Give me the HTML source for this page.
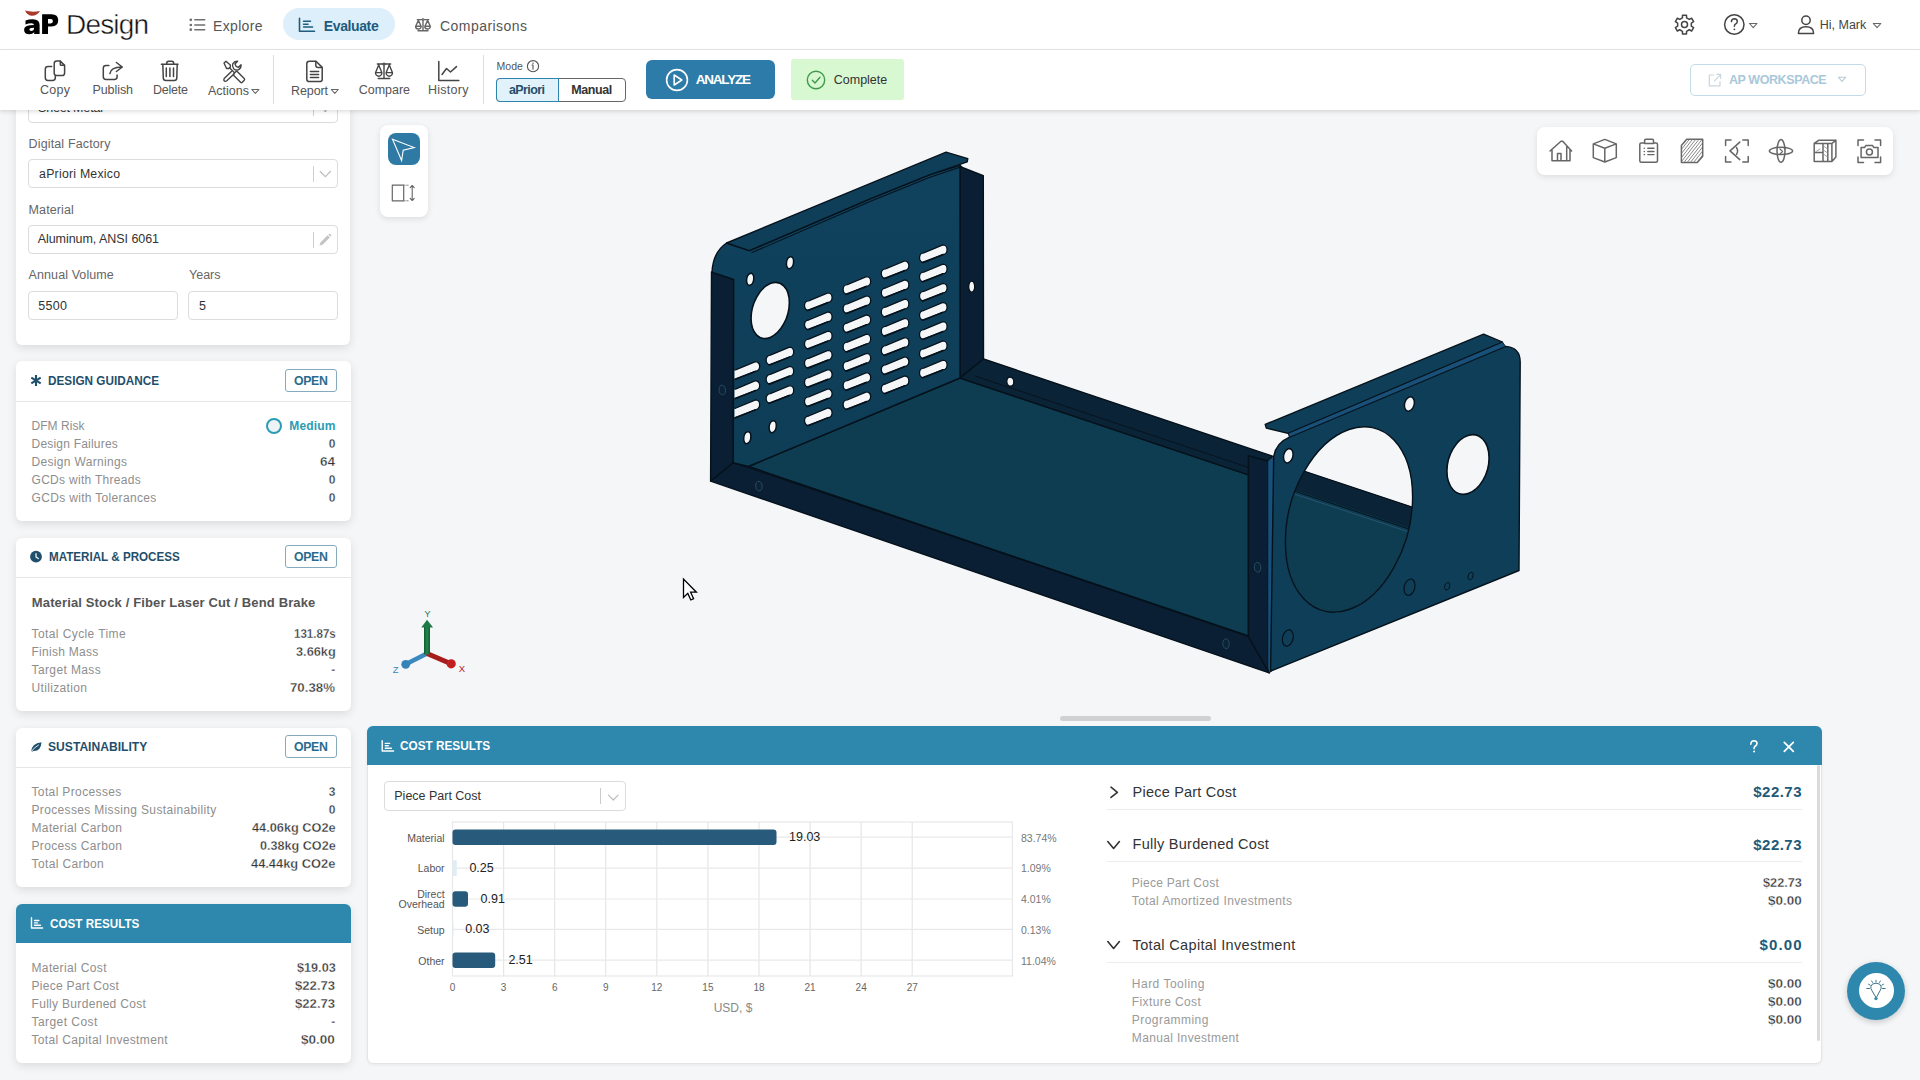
<!DOCTYPE html><html><head><meta charset="utf-8"><style>
html,body{margin:0;padding:0;}
body{width:1920px;height:1080px;overflow:hidden;position:relative;background:#f4f6f8;font-family:"Liberation Sans",sans-serif;}
.t{position:absolute;white-space:nowrap;}
.b{position:absolute;box-sizing:border-box;}
svg{position:absolute;left:0;top:0;overflow:visible}
</style></head><body>
<svg width="1920" height="1080" viewBox="0 0 1920 1080"><defs><clipPath id="bh"><circle r="1" transform="matrix(63.6,-22.4,0,90,1349,519.5)"/></clipPath><linearGradient id="gface" x1="0" y1="0" x2="0" y2="1"><stop offset="0" stop-color="#10425e"/><stop offset="1" stop-color="#0e3d56"/></linearGradient><linearGradient id="gdark" x1="0" y1="0" x2="1" y2="0"><stop offset="0" stop-color="#0a1d31"/><stop offset="1" stop-color="#0c2840"/></linearGradient></defs><polygon points="711.5,272.0 733.7,279.3 733.3,462.8 710.6,481.1" fill="#0a1f33" stroke="#05121c" stroke-width="1.4" stroke-linejoin="round"/><polygon points="960.0,165.3 962.3,167.5 983.3,175.6 983.5,359.0 960.0,378.0" fill="#0a1f33" stroke="#05121c" stroke-width="1.4" stroke-linejoin="round"/><polygon points="748.3,466.5 960.0,378.0 1248.5,474.8 1248.5,636.0" fill="#0e3d51" stroke="#05121c" stroke-width="1.4" stroke-linejoin="round"/><polygon points="960.0,378.0 983.5,359.0 1273.0,456.3 1248.5,474.8" fill="#0b2336" stroke="#05121c" stroke-width="1.4" stroke-linejoin="round"/><line x1="975.0" y1="376.0" x2="1250.0" y2="468.0" stroke="#05121c" stroke-width="0.8"/><polygon points="710.6,481.1 733.3,462.8 748.3,466.5 1248.4,636.7 1269.2,672.9" fill="#0a1f33" stroke="#05121c" stroke-width="1.4" stroke-linejoin="round"/><line x1="733.3" y1="462.8" x2="1248.5" y2="636.0" stroke="#05121c" stroke-width="0.8"/><polygon points="1248.4,455.6 1267.8,461.0 1267.8,668.0 1269.2,672.9 1248.4,636.7" fill="#0a1f33" stroke="#05121c" stroke-width="1.4" stroke-linejoin="round"/><polygon points="1267.8,461.0 1273.7,457.0 1273.7,669.6 1269.2,672.9 1267.8,668.0" fill="#17507a" stroke="#05121c" stroke-width="0.7" stroke-linejoin="round"/><path d="M749.3,250.7 L870,198.8 L930,174.6 L960,165.3 L960,378 L748.3,466.5 L733.3,462.8 L733.7,279.3 L712,272.1 Q713,252 726.6,243 Z" fill="url(#gface)" stroke="#05121c" stroke-width="1.4" stroke-linejoin="round"/><polygon points="726.6,243.0 946.1,152.2 967.8,158.6 967.2,161.9 930.0,174.6 870.0,198.8 749.3,250.7" fill="#0f3f58" stroke="#05121c" stroke-width="1.4" stroke-linejoin="round"/><polyline points="751.5,252.8 870,201.6 930,177.3 960.5,167" fill="none" stroke="#05121c" stroke-width="1.1"/><path d="M923.70,252.88 L942.90,244.92 A4.2,4.8 0 0 1 942.90,254.52 L923.70,262.48 A4.2,4.8 0 0 1 923.70,252.88 Z" fill="#f4f6f8" stroke="#05121c" stroke-width="1.3"/><path d="M921.70,262.78 L942.90,254.82" stroke="#05121c" stroke-width="1.5"/><path d="M923.70,272.08 L942.90,264.12 A4.2,4.8 0 0 1 942.90,273.72 L923.70,281.68 A4.2,4.8 0 0 1 923.70,272.08 Z" fill="#f4f6f8" stroke="#05121c" stroke-width="1.3"/><path d="M921.70,281.98 L942.90,274.02" stroke="#05121c" stroke-width="1.5"/><path d="M923.70,291.28 L942.90,283.32 A4.2,4.8 0 0 1 942.90,292.92 L923.70,300.88 A4.2,4.8 0 0 1 923.70,291.28 Z" fill="#f4f6f8" stroke="#05121c" stroke-width="1.3"/><path d="M921.70,301.18 L942.90,293.22" stroke="#05121c" stroke-width="1.5"/><path d="M923.70,310.48 L942.90,302.52 A4.2,4.8 0 0 1 942.90,312.12 L923.70,320.08 A4.2,4.8 0 0 1 923.70,310.48 Z" fill="#f4f6f8" stroke="#05121c" stroke-width="1.3"/><path d="M921.70,320.38 L942.90,312.42" stroke="#05121c" stroke-width="1.5"/><path d="M923.70,329.68 L942.90,321.72 A4.2,4.8 0 0 1 942.90,331.32 L923.70,339.28 A4.2,4.8 0 0 1 923.70,329.68 Z" fill="#f4f6f8" stroke="#05121c" stroke-width="1.3"/><path d="M921.70,339.58 L942.90,331.62" stroke="#05121c" stroke-width="1.5"/><path d="M923.70,348.88 L942.90,340.92 A4.2,4.8 0 0 1 942.90,350.52 L923.70,358.48 A4.2,4.8 0 0 1 923.70,348.88 Z" fill="#f4f6f8" stroke="#05121c" stroke-width="1.3"/><path d="M921.70,358.78 L942.90,350.82" stroke="#05121c" stroke-width="1.5"/><path d="M923.70,368.08 L942.90,360.12 A4.2,4.8 0 0 1 942.90,369.72 L923.70,377.68 A4.2,4.8 0 0 1 923.70,368.08 Z" fill="#f4f6f8" stroke="#05121c" stroke-width="1.3"/><path d="M921.70,377.98 L942.90,370.02" stroke="#05121c" stroke-width="1.5"/><path d="M885.50,268.78 L904.70,260.82 A4.2,4.8 0 0 1 904.70,270.42 L885.50,278.38 A4.2,4.8 0 0 1 885.50,268.78 Z" fill="#f4f6f8" stroke="#05121c" stroke-width="1.3"/><path d="M883.50,278.68 L904.70,270.72" stroke="#05121c" stroke-width="1.5"/><path d="M885.50,287.98 L904.70,280.02 A4.2,4.8 0 0 1 904.70,289.62 L885.50,297.58 A4.2,4.8 0 0 1 885.50,287.98 Z" fill="#f4f6f8" stroke="#05121c" stroke-width="1.3"/><path d="M883.50,297.88 L904.70,289.92" stroke="#05121c" stroke-width="1.5"/><path d="M885.50,307.18 L904.70,299.22 A4.2,4.8 0 0 1 904.70,308.82 L885.50,316.78 A4.2,4.8 0 0 1 885.50,307.18 Z" fill="#f4f6f8" stroke="#05121c" stroke-width="1.3"/><path d="M883.50,317.08 L904.70,309.12" stroke="#05121c" stroke-width="1.5"/><path d="M885.50,326.38 L904.70,318.42 A4.2,4.8 0 0 1 904.70,328.02 L885.50,335.98 A4.2,4.8 0 0 1 885.50,326.38 Z" fill="#f4f6f8" stroke="#05121c" stroke-width="1.3"/><path d="M883.50,336.28 L904.70,328.32" stroke="#05121c" stroke-width="1.5"/><path d="M885.50,345.58 L904.70,337.62 A4.2,4.8 0 0 1 904.70,347.22 L885.50,355.18 A4.2,4.8 0 0 1 885.50,345.58 Z" fill="#f4f6f8" stroke="#05121c" stroke-width="1.3"/><path d="M883.50,355.48 L904.70,347.52" stroke="#05121c" stroke-width="1.5"/><path d="M885.50,364.78 L904.70,356.82 A4.2,4.8 0 0 1 904.70,366.42 L885.50,374.38 A4.2,4.8 0 0 1 885.50,364.78 Z" fill="#f4f6f8" stroke="#05121c" stroke-width="1.3"/><path d="M883.50,374.68 L904.70,366.72" stroke="#05121c" stroke-width="1.5"/><path d="M885.50,383.98 L904.70,376.02 A4.2,4.8 0 0 1 904.70,385.62 L885.50,393.58 A4.2,4.8 0 0 1 885.50,383.98 Z" fill="#f4f6f8" stroke="#05121c" stroke-width="1.3"/><path d="M883.50,393.88 L904.70,385.92" stroke="#05121c" stroke-width="1.5"/><path d="M847.30,284.58 L866.50,276.62 A4.2,4.8 0 0 1 866.50,286.22 L847.30,294.18 A4.2,4.8 0 0 1 847.30,284.58 Z" fill="#f4f6f8" stroke="#05121c" stroke-width="1.3"/><path d="M845.30,294.48 L866.50,286.52" stroke="#05121c" stroke-width="1.5"/><path d="M847.30,303.78 L866.50,295.82 A4.2,4.8 0 0 1 866.50,305.42 L847.30,313.38 A4.2,4.8 0 0 1 847.30,303.78 Z" fill="#f4f6f8" stroke="#05121c" stroke-width="1.3"/><path d="M845.30,313.68 L866.50,305.72" stroke="#05121c" stroke-width="1.5"/><path d="M847.30,322.98 L866.50,315.02 A4.2,4.8 0 0 1 866.50,324.62 L847.30,332.58 A4.2,4.8 0 0 1 847.30,322.98 Z" fill="#f4f6f8" stroke="#05121c" stroke-width="1.3"/><path d="M845.30,332.88 L866.50,324.92" stroke="#05121c" stroke-width="1.5"/><path d="M847.30,342.18 L866.50,334.22 A4.2,4.8 0 0 1 866.50,343.82 L847.30,351.78 A4.2,4.8 0 0 1 847.30,342.18 Z" fill="#f4f6f8" stroke="#05121c" stroke-width="1.3"/><path d="M845.30,352.08 L866.50,344.12" stroke="#05121c" stroke-width="1.5"/><path d="M847.30,361.38 L866.50,353.42 A4.2,4.8 0 0 1 866.50,363.02 L847.30,370.98 A4.2,4.8 0 0 1 847.30,361.38 Z" fill="#f4f6f8" stroke="#05121c" stroke-width="1.3"/><path d="M845.30,371.28 L866.50,363.32" stroke="#05121c" stroke-width="1.5"/><path d="M847.30,380.58 L866.50,372.62 A4.2,4.8 0 0 1 866.50,382.22 L847.30,390.18 A4.2,4.8 0 0 1 847.30,380.58 Z" fill="#f4f6f8" stroke="#05121c" stroke-width="1.3"/><path d="M845.30,390.48 L866.50,382.52" stroke="#05121c" stroke-width="1.5"/><path d="M847.30,399.78 L866.50,391.82 A4.2,4.8 0 0 1 866.50,401.42 L847.30,409.38 A4.2,4.8 0 0 1 847.30,399.78 Z" fill="#f4f6f8" stroke="#05121c" stroke-width="1.3"/><path d="M845.30,409.68 L866.50,401.72" stroke="#05121c" stroke-width="1.5"/><path d="M808.70,300.78 L827.90,292.82 A4.2,4.8 0 0 1 827.90,302.42 L808.70,310.38 A4.2,4.8 0 0 1 808.70,300.78 Z" fill="#f4f6f8" stroke="#05121c" stroke-width="1.3"/><path d="M806.70,310.68 L827.90,302.72" stroke="#05121c" stroke-width="1.5"/><path d="M808.70,319.98 L827.90,312.02 A4.2,4.8 0 0 1 827.90,321.62 L808.70,329.58 A4.2,4.8 0 0 1 808.70,319.98 Z" fill="#f4f6f8" stroke="#05121c" stroke-width="1.3"/><path d="M806.70,329.88 L827.90,321.92" stroke="#05121c" stroke-width="1.5"/><path d="M808.70,339.18 L827.90,331.22 A4.2,4.8 0 0 1 827.90,340.82 L808.70,348.78 A4.2,4.8 0 0 1 808.70,339.18 Z" fill="#f4f6f8" stroke="#05121c" stroke-width="1.3"/><path d="M806.70,349.08 L827.90,341.12" stroke="#05121c" stroke-width="1.5"/><path d="M808.70,358.38 L827.90,350.42 A4.2,4.8 0 0 1 827.90,360.02 L808.70,367.98 A4.2,4.8 0 0 1 808.70,358.38 Z" fill="#f4f6f8" stroke="#05121c" stroke-width="1.3"/><path d="M806.70,368.28 L827.90,360.32" stroke="#05121c" stroke-width="1.5"/><path d="M808.70,377.58 L827.90,369.62 A4.2,4.8 0 0 1 827.90,379.22 L808.70,387.18 A4.2,4.8 0 0 1 808.70,377.58 Z" fill="#f4f6f8" stroke="#05121c" stroke-width="1.3"/><path d="M806.70,387.48 L827.90,379.52" stroke="#05121c" stroke-width="1.5"/><path d="M808.70,396.78 L827.90,388.82 A4.2,4.8 0 0 1 827.90,398.42 L808.70,406.38 A4.2,4.8 0 0 1 808.70,396.78 Z" fill="#f4f6f8" stroke="#05121c" stroke-width="1.3"/><path d="M806.70,406.68 L827.90,398.72" stroke="#05121c" stroke-width="1.5"/><path d="M808.70,415.98 L827.90,408.02 A4.2,4.8 0 0 1 827.90,417.62 L808.70,425.58 A4.2,4.8 0 0 1 808.70,415.98 Z" fill="#f4f6f8" stroke="#05121c" stroke-width="1.3"/><path d="M806.70,425.88 L827.90,417.92" stroke="#05121c" stroke-width="1.5"/><path d="M770.30,355.18 L789.50,347.22 A4.2,4.8 0 0 1 789.50,356.82 L770.30,364.78 A4.2,4.8 0 0 1 770.30,355.18 Z" fill="#f4f6f8" stroke="#05121c" stroke-width="1.3"/><path d="M768.30,365.08 L789.50,357.12" stroke="#05121c" stroke-width="1.5"/><path d="M770.30,374.38 L789.50,366.42 A4.2,4.8 0 0 1 789.50,376.02 L770.30,383.98 A4.2,4.8 0 0 1 770.30,374.38 Z" fill="#f4f6f8" stroke="#05121c" stroke-width="1.3"/><path d="M768.30,384.28 L789.50,376.32" stroke="#05121c" stroke-width="1.5"/><path d="M770.30,393.58 L789.50,385.62 A4.2,4.8 0 0 1 789.50,395.22 L770.30,403.18 A4.2,4.8 0 0 1 770.30,393.58 Z" fill="#f4f6f8" stroke="#05121c" stroke-width="1.3"/><path d="M768.30,403.48 L789.50,395.52" stroke="#05121c" stroke-width="1.5"/><g clip-path="url(#lc)"><path d="M735.50,369.85 L755.50,361.55 A4.2,4.8 0 0 1 755.50,371.15 L735.50,379.45 A4.2,4.8 0 0 1 735.50,369.85 Z" fill="#f4f6f8" stroke="#05121c" stroke-width="1.3"/><path d="M733.50,379.75 L755.50,371.45" stroke="#05121c" stroke-width="1.5"/></g><g clip-path="url(#lc)"><path d="M735.50,389.05 L755.50,380.75 A4.2,4.8 0 0 1 755.50,390.35 L735.50,398.65 A4.2,4.8 0 0 1 735.50,389.05 Z" fill="#f4f6f8" stroke="#05121c" stroke-width="1.3"/><path d="M733.50,398.95 L755.50,390.65" stroke="#05121c" stroke-width="1.5"/></g><g clip-path="url(#lc)"><path d="M735.50,408.25 L755.50,399.95 A4.2,4.8 0 0 1 755.50,409.55 L735.50,417.85 A4.2,4.8 0 0 1 735.50,408.25 Z" fill="#f4f6f8" stroke="#05121c" stroke-width="1.3"/><path d="M733.50,418.15 L755.50,409.85" stroke="#05121c" stroke-width="1.5"/></g><defs><clipPath id="lc"><rect x="734.5" y="200" width="100" height="300"/></clipPath></defs><circle r="1" fill="#f4f6f8" stroke="#05121c" stroke-width="1.6" vector-effect="non-scaling-stroke" transform="matrix(19.150,-7.850,0.000,26.900,770.20,310.50)"/><circle r="1" fill="#f4f6f8" stroke="#05121c" stroke-width="1.5" vector-effect="non-scaling-stroke" transform="matrix(3.600,-1.400,0.000,5.800,790.00,262.70)"/><circle r="1" fill="#f4f6f8" stroke="#05121c" stroke-width="1.5" vector-effect="non-scaling-stroke" transform="matrix(3.600,-1.400,0.000,5.800,750.20,279.30)"/><circle r="1" fill="#f4f6f8" stroke="#05121c" stroke-width="1.5" vector-effect="non-scaling-stroke" transform="matrix(3.600,-1.400,0.000,5.800,772.70,426.70)"/><circle r="1" fill="#f4f6f8" stroke="#05121c" stroke-width="1.5" vector-effect="non-scaling-stroke" transform="matrix(3.600,-1.400,0.000,5.800,747.30,437.70)"/><circle r="1" fill="#f4f6f8" stroke="#05121c" stroke-width="1.3" vector-effect="non-scaling-stroke" transform="matrix(3.000,0.000,0.000,5.500,971.70,286.70)"/><circle r="1" fill="#f4f6f8" stroke="#05121c" stroke-width="1.3" vector-effect="non-scaling-stroke" transform="matrix(3.500,0.500,0.000,4.500,1010.30,381.70)"/><circle r="1" fill="#0b2336" stroke="#2a4a60" stroke-width="1.0" vector-effect="non-scaling-stroke" transform="matrix(3.200,0.600,0.000,4.800,722.30,390.00)"/><circle r="1" fill="#0b2336" stroke="#2a4a60" stroke-width="1.0" vector-effect="non-scaling-stroke" transform="matrix(3.200,0.600,0.000,4.800,758.90,486.10)"/><circle r="1" fill="#0b2336" stroke="#2a4a60" stroke-width="1.0" vector-effect="non-scaling-stroke" transform="matrix(3.200,0.600,0.000,4.800,1226.00,643.70)"/><circle r="1" fill="#0b2336" stroke="#2a4a60" stroke-width="1.0" vector-effect="non-scaling-stroke" transform="matrix(3.200,0.600,0.000,4.800,1257.60,567.30)"/><polygon points="1265.2,424.4 1483.6,334.2 1502.5,342.2 1288.1,433.4 1266.3,428.1" fill="#0f3f58" stroke="#05121c" stroke-width="1.4" stroke-linejoin="round"/><path d="M1289.5,437.2 L1505.6,346.4 Q1520.2,347.5 1520.2,362 L1519,570.5 L1270.6,671.2 L1273.7,456.3 Q1276,443 1289.5,437.2 Z" fill="#0f3f58" stroke="#05121c" stroke-width="1.4" stroke-linejoin="round"/><polygon points="1288.1,433.4 1502.5,342.2 1505.6,346.4 1289.5,437.2" fill="#185079" stroke="#05121c" stroke-width="0.9" stroke-linejoin="round"/><g clip-path="url(#bh)"><rect x="1270" y="420" width="160" height="200" fill="#f4f6f8"/><polygon points="1270.0,459.8 1430.0,513.0 1430.0,620.0 1270.0,620.0" fill="#0e3d51" stroke="#05121c" stroke-width="0" stroke-linejoin="round"/><polygon points="1270.0,459.8 1430.0,513.0 1430.0,535.0 1270.0,482.0" fill="#0b2336" stroke="#05121c" stroke-width="0" stroke-linejoin="round"/><line x1="1270.0" y1="459.8" x2="1430.0" y2="513.0" stroke="#05121c" stroke-width="1.2"/><line x1="1270.0" y1="483.0" x2="1430.0" y2="536.0" stroke="#05121c" stroke-width="1.0"/><line x1="1270.0" y1="486.0" x2="1430.0" y2="539.0" stroke="#2c5878" stroke-width="0.8"/></g><circle r="1" fill="none" stroke="#05121c" stroke-width="1.4" vector-effect="non-scaling-stroke" transform="matrix(63.600,-22.400,0.000,90.000,1349.00,519.50)"/><circle r="1" fill="#f4f6f8" stroke="#05121c" stroke-width="1.6" vector-effect="non-scaling-stroke" transform="matrix(21.100,-6.600,0.000,29.100,1468.00,464.50)"/><circle r="1" fill="#f4f6f8" stroke="#05121c" stroke-width="1.5" vector-effect="non-scaling-stroke" transform="matrix(4.800,-1.500,0.000,7.000,1288.30,455.80)"/><circle r="1" fill="#f4f6f8" stroke="#05121c" stroke-width="1.5" vector-effect="non-scaling-stroke" transform="matrix(5.000,-1.500,0.000,7.000,1409.40,404.00)"/><circle r="1" fill="#0f3f58" stroke="#05121c" stroke-width="1.2" vector-effect="non-scaling-stroke" transform="matrix(5.500,-1.800,0.000,8.000,1409.50,587.20)"/><circle r="1" fill="#0f3f58" stroke="#05121c" stroke-width="1.2" vector-effect="non-scaling-stroke" transform="matrix(5.500,-1.800,0.000,8.000,1287.80,638.00)"/><circle r="1" fill="#0f3f58" stroke="#05121c" stroke-width="1.0" vector-effect="non-scaling-stroke" transform="matrix(2.600,-0.800,0.000,3.600,1447.20,586.20)"/><circle r="1" fill="#0f3f58" stroke="#05121c" stroke-width="1.0" vector-effect="non-scaling-stroke" transform="matrix(2.600,-0.800,0.000,3.600,1470.60,576.00)"/></svg>
<div class="b" style="left:16px;top:60px;width:334px;height:285px;background:#fff;border-radius:6px;box-shadow:0 3px 10px rgba(0,0,0,0.11);"></div>
<div class="b" style="left:16px;top:361px;width:335px;height:160px;background:#fff;border-radius:6px;box-shadow:0 3px 10px rgba(0,0,0,0.11);"></div>
<div class="b" style="left:16px;top:538px;width:335px;height:173px;background:#fff;border-radius:6px;box-shadow:0 3px 10px rgba(0,0,0,0.11);"></div>
<div class="b" style="left:16px;top:728px;width:335px;height:159px;background:#fff;border-radius:6px;box-shadow:0 3px 10px rgba(0,0,0,0.11);"></div>
<div class="b" style="left:16px;top:904px;width:335px;height:159px;background:#fff;border-radius:6px;box-shadow:0 3px 10px rgba(0,0,0,0.11);"></div>
<div class="b" style="left:28px;top:93px;width:310px;height:30px;border:1px solid #dcdcdc;border-radius:4px;background:#fff"></div>
<div class="t" style="left:38.00px;top:99.97px;font-size:12.5px;line-height:16px;color:#333333;letter-spacing:-0.170px;">Sheet Metal</div>
<div class="b" style="left:313px;top:100px;width:1px;height:16px;background:#d0d0d0"></div>
<div class="b" style="left:28px;top:159px;width:310px;height:29px;border:1px solid #dcdcdc;border-radius:4px;background:#fff"></div>
<div class="b" style="left:28px;top:225px;width:310px;height:29px;border:1px solid #dcdcdc;border-radius:4px;background:#fff"></div>
<div class="b" style="left:28px;top:291px;width:150px;height:29px;border:1px solid #dcdcdc;border-radius:4px;background:#fff"></div>
<div class="b" style="left:188px;top:291px;width:150px;height:29px;border:1px solid #dcdcdc;border-radius:4px;background:#fff"></div>
<div class="b" style="left:313px;top:166px;width:1px;height:16px;background:#d0d0d0"></div>
<div class="b" style="left:313px;top:232px;width:1px;height:16px;background:#d0d0d0"></div>
<div class="t" style="left:28.60px;top:135.67px;font-size:12.5px;line-height:16px;color:#666666;letter-spacing:0.136px;">Digital Factory</div>
<div class="t" style="left:39.10px;top:166.04px;font-size:12.3px;line-height:16px;color:#333333;letter-spacing:0.231px;">aPriori Mexico</div>
<div class="t" style="left:28.60px;top:201.67px;font-size:12.5px;line-height:16px;color:#666666;letter-spacing:0.107px;">Material</div>
<div class="t" style="left:37.70px;top:231.17px;font-size:12.5px;line-height:16px;color:#333333;letter-spacing:-0.050px;">Aluminum, ANSI 6061</div>
<div class="t" style="left:28.60px;top:267.27px;font-size:12.5px;line-height:16px;color:#666666;letter-spacing:0.092px;">Annual Volume</div>
<div class="t" style="left:189.00px;top:267.27px;font-size:12.5px;line-height:16px;color:#666666;letter-spacing:0.000px;">Years</div>
<div class="t" style="left:38.20px;top:298.27px;font-size:12.5px;line-height:16px;color:#333333;letter-spacing:0.300px;">5500</div>
<div class="t" style="left:199.00px;top:298.27px;font-size:12.5px;line-height:16px;color:#333333;letter-spacing:0.000px;">5</div>
<div class="t" style="left:48.30px;top:372.26px;font-size:12.8px;line-height:17px;color:#1f4f6b;font-weight:700;letter-spacing:0.000px;transform:scaleX(0.9181);transform-origin:0 0;">DESIGN GUIDANCE</div>
<div class="b" style="left:16px;top:401px;width:335px;height:1px;background:#e6e6e6"></div>
<div class="b" style="left:285px;top:369px;width:52px;height:23px;border:1px solid #86aabd;border-radius:3px"></div>
<div class="t" style="left:294.00px;top:373.34px;font-size:12.3px;line-height:16px;color:#2a6b8c;font-weight:700;letter-spacing:-0.350px;">OPEN</div>
<div class="t" style="left:48.60px;top:548.26px;font-size:12.8px;line-height:17px;color:#1f4f6b;font-weight:700;letter-spacing:0.000px;transform:scaleX(0.9090);transform-origin:0 0;">MATERIAL &amp; PROCESS</div>
<div class="b" style="left:16px;top:577px;width:335px;height:1px;background:#e6e6e6"></div>
<div class="b" style="left:285px;top:545px;width:52px;height:23px;border:1px solid #86aabd;border-radius:3px"></div>
<div class="t" style="left:294.00px;top:549.34px;font-size:12.3px;line-height:16px;color:#2a6b8c;font-weight:700;letter-spacing:-0.350px;">OPEN</div>
<div class="t" style="left:48.00px;top:738.16px;font-size:12.8px;line-height:17px;color:#1f4f6b;font-weight:700;letter-spacing:0.000px;transform:scaleX(0.9457);transform-origin:0 0;">SUSTAINABILITY</div>
<div class="b" style="left:16px;top:767px;width:335px;height:1px;background:#e6e6e6"></div>
<div class="b" style="left:285px;top:735px;width:52px;height:23px;border:1px solid #86aabd;border-radius:3px"></div>
<div class="t" style="left:294.00px;top:739.34px;font-size:12.3px;line-height:16px;color:#2a6b8c;font-weight:700;letter-spacing:-0.350px;">OPEN</div>
<div class="b" style="left:16px;top:904px;width:335px;height:39px;background:#2e87ad;border-radius:6px 6px 0 0"></div>
<div class="t" style="left:49.50px;top:914.96px;font-size:12.8px;line-height:17px;color:#ffffff;font-weight:700;letter-spacing:0.000px;transform:scaleX(0.9132);transform-origin:0 0;">COST RESULTS</div>
<div class="t" style="left:31.50px;top:417.84px;font-size:12px;line-height:16px;color:#8e8e8e;letter-spacing:0.057px;">DFM Risk</div>
<div class="t" style="left:31.50px;top:435.84px;font-size:12px;line-height:16px;color:#8e8e8e;letter-spacing:0.211px;">Design Failures</div>
<div class="t" style="left:328.65px;top:435.84px;font-size:12px;line-height:16px;color:#333333;font-weight:700;letter-spacing:0.000px;-webkit-text-stroke:0.3px #fff;">0</div>
<div class="t" style="left:31.50px;top:453.84px;font-size:12px;line-height:16px;color:#8e8e8e;letter-spacing:0.332px;">Design Warnings</div>
<div class="t" style="left:320.30px;top:453.84px;font-size:12px;line-height:16px;color:#333333;font-weight:700;letter-spacing:0.000px;-webkit-text-stroke:0.3px #fff;transform:scaleX(1.1236);transform-origin:0 0;">64</div>
<div class="t" style="left:31.50px;top:471.84px;font-size:12px;line-height:16px;color:#8e8e8e;letter-spacing:0.300px;">GCDs with Threads</div>
<div class="t" style="left:328.65px;top:471.84px;font-size:12px;line-height:16px;color:#333333;font-weight:700;letter-spacing:0.000px;-webkit-text-stroke:0.3px #fff;">0</div>
<div class="t" style="left:31.50px;top:489.84px;font-size:12px;line-height:16px;color:#8e8e8e;letter-spacing:0.332px;">GCDs with Tolerances</div>
<div class="t" style="left:328.65px;top:489.84px;font-size:12px;line-height:16px;color:#333333;font-weight:700;letter-spacing:0.000px;-webkit-text-stroke:0.3px #fff;">0</div>
<div class="b" style="left:266px;top:418px;width:16px;height:16px;border:2px solid #2a9db5;border-radius:50%;background:#eef3f5"></div>
<div class="t" style="left:289.30px;top:417.84px;font-size:12px;line-height:16px;color:#2a9db5;font-weight:700;letter-spacing:0.170px;">Medium</div>
<div class="t" style="left:31.80px;top:594.00px;font-size:13px;line-height:17px;color:#555555;font-weight:700;letter-spacing:0.139px;">Material Stock / Fiber Laser Cut / Bend Brake</div>
<div class="t" style="left:31.50px;top:625.54px;font-size:12px;line-height:16px;color:#8e8e8e;letter-spacing:0.410px;">Total Cycle Time</div>
<div class="t" style="left:293.50px;top:625.54px;font-size:12px;line-height:16px;color:#333333;font-weight:700;letter-spacing:0.000px;-webkit-text-stroke:0.3px #fff;transform:scaleX(0.9631);transform-origin:0 0;">131.87s</div>
<div class="t" style="left:31.50px;top:643.54px;font-size:12px;line-height:16px;color:#8e8e8e;letter-spacing:0.280px;">Finish Mass</div>
<div class="t" style="left:295.60px;top:643.54px;font-size:12px;line-height:16px;color:#333333;font-weight:700;letter-spacing:0.000px;-webkit-text-stroke:0.3px #fff;transform:scaleX(1.0629);transform-origin:0 0;">3.66kg</div>
<div class="t" style="left:31.50px;top:661.54px;font-size:12px;line-height:16px;color:#8e8e8e;letter-spacing:0.385px;">Target Mass</div>
<div class="t" style="left:331.30px;top:661.54px;font-size:12px;line-height:16px;color:#333333;font-weight:700;letter-spacing:0.000px;-webkit-text-stroke:0.3px #fff;">-</div>
<div class="t" style="left:31.50px;top:679.54px;font-size:12px;line-height:16px;color:#8e8e8e;letter-spacing:0.350px;">Utilization</div>
<div class="t" style="left:290.40px;top:679.54px;font-size:12px;line-height:16px;color:#333333;font-weight:700;letter-spacing:0.000px;-webkit-text-stroke:0.3px #fff;transform:scaleX(1.1032);transform-origin:0 0;">70.38%</div>
<div class="t" style="left:31.50px;top:784.44px;font-size:12px;line-height:16px;color:#8e8e8e;letter-spacing:0.364px;">Total Processes</div>
<div class="t" style="left:328.65px;top:784.44px;font-size:12px;line-height:16px;color:#333333;font-weight:700;letter-spacing:0.000px;-webkit-text-stroke:0.3px #fff;">3</div>
<div class="t" style="left:31.50px;top:802.44px;font-size:12px;line-height:16px;color:#8e8e8e;letter-spacing:0.342px;">Processes Missing Sustainability</div>
<div class="t" style="left:328.65px;top:802.44px;font-size:12px;line-height:16px;color:#333333;font-weight:700;letter-spacing:0.000px;-webkit-text-stroke:0.3px #fff;">0</div>
<div class="t" style="left:31.50px;top:820.44px;font-size:12px;line-height:16px;color:#8e8e8e;letter-spacing:0.357px;">Material Carbon</div>
<div class="t" style="left:251.70px;top:820.44px;font-size:12px;line-height:16px;color:#333333;font-weight:700;letter-spacing:0.000px;-webkit-text-stroke:0.3px #fff;transform:scaleX(1.0623);transform-origin:0 0;">44.06kg CO2e</div>
<div class="t" style="left:31.50px;top:838.44px;font-size:12px;line-height:16px;color:#8e8e8e;letter-spacing:0.335px;">Process Carbon</div>
<div class="t" style="left:259.60px;top:838.44px;font-size:12px;line-height:16px;color:#333333;font-weight:700;letter-spacing:0.000px;-webkit-text-stroke:0.3px #fff;transform:scaleX(1.0507);transform-origin:0 0;">0.38kg CO2e</div>
<div class="t" style="left:31.50px;top:856.44px;font-size:12px;line-height:16px;color:#8e8e8e;letter-spacing:0.386px;">Total Carbon</div>
<div class="t" style="left:251.00px;top:856.44px;font-size:12px;line-height:16px;color:#333333;font-weight:700;letter-spacing:0.000px;-webkit-text-stroke:0.3px #fff;transform:scaleX(1.0712);transform-origin:0 0;">44.44kg CO2e</div>
<div class="t" style="left:31.50px;top:959.84px;font-size:12px;line-height:16px;color:#8e8e8e;letter-spacing:0.358px;">Material Cost</div>
<div class="t" style="left:296.60px;top:959.84px;font-size:12px;line-height:16px;color:#333333;font-weight:700;letter-spacing:0.000px;-webkit-text-stroke:0.3px #fff;transform:scaleX(1.0545);transform-origin:0 0;">$19.03</div>
<div class="t" style="left:31.50px;top:977.84px;font-size:12px;line-height:16px;color:#8e8e8e;letter-spacing:0.289px;">Piece Part Cost</div>
<div class="t" style="left:295.20px;top:977.84px;font-size:12px;line-height:16px;color:#333333;font-weight:700;letter-spacing:0.000px;-webkit-text-stroke:0.3px #fff;transform:scaleX(1.0926);transform-origin:0 0;">$22.73</div>
<div class="t" style="left:31.50px;top:995.84px;font-size:12px;line-height:16px;color:#8e8e8e;letter-spacing:0.314px;">Fully Burdened Cost</div>
<div class="t" style="left:295.20px;top:995.84px;font-size:12px;line-height:16px;color:#333333;font-weight:700;letter-spacing:0.000px;-webkit-text-stroke:0.3px #fff;transform:scaleX(1.0926);transform-origin:0 0;">$22.73</div>
<div class="t" style="left:31.50px;top:1013.84px;font-size:12px;line-height:16px;color:#8e8e8e;letter-spacing:0.445px;">Target Cost</div>
<div class="t" style="left:331.30px;top:1013.84px;font-size:12px;line-height:16px;color:#333333;font-weight:700;letter-spacing:0.000px;-webkit-text-stroke:0.3px #fff;">-</div>
<div class="t" style="left:31.50px;top:1031.84px;font-size:12px;line-height:16px;color:#8e8e8e;letter-spacing:0.346px;">Total Capital Investment</div>
<div class="t" style="left:301.40px;top:1031.84px;font-size:12px;line-height:16px;color:#333333;font-weight:700;letter-spacing:0.000px;-webkit-text-stroke:0.3px #fff;transform:scaleX(1.1281);transform-origin:0 0;">$0.00</div>
<div class="b" style="left:0;top:0;width:1920px;height:50px;background:#fff;border-bottom:1px solid #e3e3e3"></div>
<div class="b" style="left:0;top:50px;width:1920px;height:60px;background:#fff;box-shadow:0 2px 4px rgba(0,0,0,0.12)"></div>
<div class="t" style="left:66.00px;top:7.10px;font-size:28px;line-height:36px;color:#111;letter-spacing:-0.830px;-webkit-text-stroke:0.45px #fff;">Design</div>
<div class="t" style="left:213.00px;top:16.95px;font-size:14px;line-height:18px;color:#555;letter-spacing:0.342px;">Explore</div>
<div class="b" style="left:283px;top:8px;width:112px;height:32px;border-radius:16px;background:#ddeffa"></div>
<div class="t" style="left:323.80px;top:16.95px;font-size:14px;line-height:18px;color:#1e5c7e;font-weight:700;letter-spacing:-0.386px;">Evaluate</div>
<div class="t" style="left:440.00px;top:16.95px;font-size:14px;line-height:18px;color:#555;letter-spacing:0.450px;">Comparisons</div>
<div class="t" style="left:1819.80px;top:16.67px;font-size:12.5px;line-height:16px;color:#444;letter-spacing:-0.014px;">Hi, Mark</div>
<div class="t" style="left:40.00px;top:81.67px;font-size:12.5px;line-height:16px;color:#555;letter-spacing:0.267px;">Copy</div>
<div class="t" style="left:92.50px;top:81.67px;font-size:12.5px;line-height:16px;color:#555;letter-spacing:-0.083px;">Publish</div>
<div class="t" style="left:152.90px;top:81.67px;font-size:12.5px;line-height:16px;color:#555;letter-spacing:-0.190px;">Delete</div>
<div class="t" style="left:207.90px;top:82.67px;font-size:12.5px;line-height:16px;color:#555;letter-spacing:0.033px;">Actions</div>
<div class="b" style="left:272.5px;top:55px;width:1px;height:49px;background:#ddd"></div>
<div class="t" style="left:291.00px;top:82.67px;font-size:12.5px;line-height:16px;color:#555;letter-spacing:-0.100px;">Report</div>
<div class="t" style="left:358.70px;top:81.67px;font-size:12.5px;line-height:16px;color:#555;letter-spacing:-0.017px;">Compare</div>
<div class="t" style="left:428.00px;top:81.67px;font-size:12.5px;line-height:16px;color:#555;letter-spacing:0.267px;">History</div>
<div class="b" style="left:482.5px;top:55px;width:1px;height:49px;background:#ddd"></div>
<div class="t" style="left:496.60px;top:59.36px;font-size:10.5px;line-height:14px;color:#555;letter-spacing:0.000px;">Mode</div>
<div class="b" style="left:496px;top:78px;width:130px;height:24px;border:1px solid #666;border-radius:4px;background:#fff"></div>
<div class="b" style="left:496px;top:78px;width:63px;height:24px;border:1px solid #2d84ad;border-radius:4px 0 0 4px;background:#e2f2fb"></div>
<div class="t" style="left:509.00px;top:82.17px;font-size:12.5px;line-height:16px;color:#1f4f6b;font-weight:700;letter-spacing:-0.600px;">aPriori</div>
<div class="t" style="left:571.30px;top:81.97px;font-size:12.5px;line-height:16px;color:#333;font-weight:700;letter-spacing:-0.430px;">Manual</div>
<div class="b" style="left:646px;top:60px;width:129px;height:39px;border-radius:6px;background:#2d7ba8"></div>
<div class="t" style="left:695.70px;top:71.32px;font-size:13.5px;line-height:18px;color:#fff;font-weight:700;letter-spacing:-1.200px;">ANALYZE</div>
<div class="b" style="left:791px;top:59px;width:113px;height:41px;border-radius:3px;background:#d7f8d1"></div>
<div class="t" style="left:833.75px;top:72.47px;font-size:12.5px;line-height:16px;color:#333;letter-spacing:0.000px;">Complete</div>
<div class="b" style="left:1690px;top:64px;width:176px;height:32px;border-radius:5px;border:1px solid #c3dbe6;background:#fff"></div>
<div class="t" style="left:1729.00px;top:72.17px;font-size:12.5px;line-height:16px;color:#a9c8da;font-weight:700;letter-spacing:-0.423px;">AP WORKSPACE</div>
<div class="b" style="left:380px;top:125px;width:48px;height:92px;background:#fff;border-radius:8px;box-shadow:0 2px 6px rgba(0,0,0,0.10)"></div>
<div class="b" style="left:388px;top:133px;width:32px;height:32px;background:#2e7aa5;border-radius:8px"></div>
<div class="b" style="left:1537px;top:127px;width:356px;height:48px;background:#fff;border-radius:8px;box-shadow:0 2px 6px rgba(0,0,0,0.10)"></div>
<div class="b" style="left:1059.5px;top:716px;width:151px;height:5px;border-radius:3px;background:#cfd1d3"></div>
<div class="b" style="left:367px;top:726px;width:1455px;height:338px;background:#fff;border-radius:6px;border:1px solid #e2e4e6;box-shadow:0 1px 3px rgba(0,0,0,0.06)"></div>
<div class="b" style="left:367px;top:726px;width:1455px;height:39px;background:#2e87ad;border-radius:6px 6px 0 0"></div>
<div class="t" style="left:400.10px;top:738.07px;font-size:12.5px;line-height:16px;color:#fff;font-weight:700;letter-spacing:0.000px;transform:scaleX(0.9425);transform-origin:0 0;">COST RESULTS</div>
<div class="b" style="left:1816.8px;top:765px;width:3px;height:276px;background:#d8dadc;border-radius:2px"></div>
<div class="b" style="left:383.5px;top:781px;width:242px;height:30px;border:1px solid #dcdcdc;border-radius:4px"></div>
<div class="b" style="left:600px;top:788px;width:1px;height:16px;background:#ccc"></div>
<div class="t" style="left:394.30px;top:787.67px;font-size:12.5px;line-height:16px;color:#333;letter-spacing:-0.011px;">Piece Part Cost</div>
<svg width="1920" height="1080" viewBox="0 0 1920 1080" style="position:absolute;left:0;top:0"><rect x="452.5" y="822" width="559.9" height="154" fill="none" stroke="#e8e8e8" stroke-width="1.2"/><line x1="503.6" y1="822" x2="503.6" y2="976" stroke="#e6e6e6" stroke-width="1.2"/><line x1="554.7" y1="822" x2="554.7" y2="976" stroke="#e6e6e6" stroke-width="1.2"/><line x1="605.7" y1="822" x2="605.7" y2="976" stroke="#e6e6e6" stroke-width="1.2"/><line x1="656.8" y1="822" x2="656.8" y2="976" stroke="#e6e6e6" stroke-width="1.2"/><line x1="707.9" y1="822" x2="707.9" y2="976" stroke="#e6e6e6" stroke-width="1.2"/><line x1="759.0" y1="822" x2="759.0" y2="976" stroke="#e6e6e6" stroke-width="1.2"/><line x1="810.1" y1="822" x2="810.1" y2="976" stroke="#e6e6e6" stroke-width="1.2"/><line x1="861.1" y1="822" x2="861.1" y2="976" stroke="#e6e6e6" stroke-width="1.2"/><line x1="912.2" y1="822" x2="912.2" y2="976" stroke="#e6e6e6" stroke-width="1.2"/><line x1="452.5" y1="837.2" x2="1012.4" y2="837.2" stroke="#e9e9e9" stroke-width="1.2"/><line x1="452.5" y1="868.1" x2="1012.4" y2="868.1" stroke="#e9e9e9" stroke-width="1.2"/><line x1="452.5" y1="899.0" x2="1012.4" y2="899.0" stroke="#e9e9e9" stroke-width="1.2"/><line x1="452.5" y1="929.4" x2="1012.4" y2="929.4" stroke="#e9e9e9" stroke-width="1.2"/><line x1="452.5" y1="960.2" x2="1012.4" y2="960.2" stroke="#e9e9e9" stroke-width="1.2"/><rect x="452.5" y="829.4" width="324.0" height="15.6" rx="3" fill="#285b7b"/><rect x="452.5" y="860.3" width="4.3" height="15.6" rx="1" fill="#dfeef5"/><rect x="452.5" y="891.2" width="15.5" height="15.6" rx="3" fill="#285b7b"/><rect x="452.5" y="921.6" width="1.0" height="15.6" rx="1" fill="#dfeef5"/><rect x="452.5" y="952.4" width="42.7" height="15.6" rx="3" fill="#285b7b"/></svg>
<div class="t" style="left:407.25px;top:830.56px;font-size:10.5px;line-height:14px;color:#555;letter-spacing:0.000px;">Material</div>
<div class="t" style="left:417.75px;top:861.46px;font-size:10.5px;line-height:14px;color:#555;letter-spacing:0.000px;">Labor</div>
<div class="t" style="left:417.20px;top:886.86px;font-size:10.5px;line-height:14px;color:#555;letter-spacing:0.000px;">Direct</div>
<div class="t" style="left:398.50px;top:897.36px;font-size:10.5px;line-height:14px;color:#555;letter-spacing:0.000px;">Overhead</div>
<div class="t" style="left:417.15px;top:922.76px;font-size:10.5px;line-height:14px;color:#555;letter-spacing:0.000px;">Setup</div>
<div class="t" style="left:418.35px;top:953.56px;font-size:10.5px;line-height:14px;color:#555;letter-spacing:0.000px;">Other</div>
<div class="t" style="left:789.00px;top:829.17px;font-size:12.5px;line-height:16px;color:#222;letter-spacing:0.000px;">19.03</div>
<div class="t" style="left:469.40px;top:860.07px;font-size:12.5px;line-height:16px;color:#222;letter-spacing:0.000px;">0.25</div>
<div class="t" style="left:480.60px;top:890.97px;font-size:12.5px;line-height:16px;color:#222;letter-spacing:0.000px;">0.91</div>
<div class="t" style="left:465.20px;top:921.37px;font-size:12.5px;line-height:16px;color:#222;letter-spacing:0.000px;">0.03</div>
<div class="t" style="left:508.40px;top:952.17px;font-size:12.5px;line-height:16px;color:#222;letter-spacing:0.000px;">2.51</div>
<div class="t" style="left:1021.00px;top:830.56px;font-size:10.5px;line-height:14px;color:#777;letter-spacing:0.000px;">83.74%</div>
<div class="t" style="left:1021.00px;top:861.46px;font-size:10.5px;line-height:14px;color:#777;letter-spacing:0.000px;">1.09%</div>
<div class="t" style="left:1021.00px;top:892.36px;font-size:10.5px;line-height:14px;color:#777;letter-spacing:0.000px;">4.01%</div>
<div class="t" style="left:1021.00px;top:922.76px;font-size:10.5px;line-height:14px;color:#777;letter-spacing:0.000px;">0.13%</div>
<div class="t" style="left:1021.00px;top:953.56px;font-size:10.5px;line-height:14px;color:#777;letter-spacing:0.000px;">11.04%</div>
<div class="t" style="left:449.73px;top:981.24px;font-size:10px;line-height:13px;color:#666;letter-spacing:0.000px;">0</div>
<div class="t" style="left:500.81px;top:981.24px;font-size:10px;line-height:13px;color:#666;letter-spacing:0.000px;">3</div>
<div class="t" style="left:551.88px;top:981.24px;font-size:10px;line-height:13px;color:#666;letter-spacing:0.000px;">6</div>
<div class="t" style="left:602.97px;top:981.24px;font-size:10px;line-height:13px;color:#666;letter-spacing:0.000px;">9</div>
<div class="t" style="left:651.27px;top:981.24px;font-size:10px;line-height:13px;color:#666;letter-spacing:0.000px;">12</div>
<div class="t" style="left:702.35px;top:981.24px;font-size:10px;line-height:13px;color:#666;letter-spacing:0.000px;">15</div>
<div class="t" style="left:753.43px;top:981.24px;font-size:10px;line-height:13px;color:#666;letter-spacing:0.000px;">18</div>
<div class="t" style="left:804.51px;top:981.24px;font-size:10px;line-height:13px;color:#666;letter-spacing:0.000px;">21</div>
<div class="t" style="left:855.59px;top:981.24px;font-size:10px;line-height:13px;color:#666;letter-spacing:0.000px;">24</div>
<div class="t" style="left:906.67px;top:981.24px;font-size:10px;line-height:13px;color:#666;letter-spacing:0.000px;">27</div>
<div class="t" style="left:713.65px;top:999.84px;font-size:12px;line-height:16px;color:#888;letter-spacing:0.000px;">USD, $</div>
<div class="t" style="left:1132.60px;top:782.68px;font-size:14.5px;line-height:19px;color:#333;letter-spacing:0.211px;">Piece Part Cost</div>
<div class="t" style="left:1753.30px;top:782.00px;font-size:15px;line-height:20px;color:#1f5a78;font-weight:700;letter-spacing:0.460px;">$22.73</div>
<div class="b" style="left:1107px;top:809px;width:695px;height:1px;background:#ececec"></div>
<div class="t" style="left:1132.60px;top:835.38px;font-size:14.5px;line-height:19px;color:#333;letter-spacing:0.264px;">Fully Burdened Cost</div>
<div class="t" style="left:1753.30px;top:834.70px;font-size:15px;line-height:20px;color:#1f5a78;font-weight:700;letter-spacing:0.460px;">$22.73</div>
<div class="b" style="left:1107px;top:861px;width:695px;height:1px;background:#ececec"></div>
<div class="t" style="left:1132.60px;top:935.68px;font-size:14.5px;line-height:19px;color:#333;letter-spacing:0.341px;">Total Capital Investment</div>
<div class="t" style="left:1759.50px;top:935.00px;font-size:15px;line-height:20px;color:#1f5a78;font-weight:700;letter-spacing:1.113px;">$0.00</div>
<div class="b" style="left:1107px;top:962px;width:695px;height:1px;background:#ececec"></div>
<div class="t" style="left:1131.80px;top:875.04px;font-size:12px;line-height:16px;color:#9a9a9a;letter-spacing:0.261px;">Piece Part Cost</div>
<div class="t" style="left:1762.60px;top:875.04px;font-size:12px;line-height:16px;color:#333;font-weight:700;letter-spacing:0.000px;-webkit-text-stroke:0.3px #fff;transform:scaleX(1.0599);transform-origin:0 0;">$22.73</div>
<div class="t" style="left:1131.80px;top:893.14px;font-size:12px;line-height:16px;color:#9a9a9a;letter-spacing:0.390px;">Total Amortized Investments</div>
<div class="t" style="left:1767.80px;top:893.14px;font-size:12px;line-height:16px;color:#333;font-weight:700;letter-spacing:0.000px;-webkit-text-stroke:0.3px #fff;transform:scaleX(1.1215);transform-origin:0 0;">$0.00</div>
<div class="t" style="left:1131.80px;top:976.44px;font-size:12px;line-height:16px;color:#9a9a9a;letter-spacing:0.495px;">Hard Tooling</div>
<div class="t" style="left:1767.80px;top:976.44px;font-size:12px;line-height:16px;color:#333;font-weight:700;letter-spacing:0.000px;-webkit-text-stroke:0.3px #fff;transform:scaleX(1.1215);transform-origin:0 0;">$0.00</div>
<div class="t" style="left:1131.80px;top:994.34px;font-size:12px;line-height:16px;color:#9a9a9a;letter-spacing:0.391px;">Fixture Cost</div>
<div class="t" style="left:1767.80px;top:994.34px;font-size:12px;line-height:16px;color:#333;font-weight:700;letter-spacing:0.000px;-webkit-text-stroke:0.3px #fff;transform:scaleX(1.1215);transform-origin:0 0;">$0.00</div>
<div class="t" style="left:1131.80px;top:1012.44px;font-size:12px;line-height:16px;color:#9a9a9a;letter-spacing:0.455px;">Programming</div>
<div class="t" style="left:1767.80px;top:1012.44px;font-size:12px;line-height:16px;color:#333;font-weight:700;letter-spacing:0.000px;-webkit-text-stroke:0.3px #fff;transform:scaleX(1.1215);transform-origin:0 0;">$0.00</div>
<div class="t" style="left:1131.80px;top:1029.54px;font-size:12px;line-height:16px;color:#9a9a9a;letter-spacing:0.350px;">Manual Investment</div>
<div class="b" style="left:1847px;top:962px;width:58px;height:58px;border-radius:50%;background:#2e87ad;box-shadow:0 2px 6px rgba(0,0,0,0.2)"></div>
<div class="b" style="left:1858.5px;top:973px;width:35px;height:35px;border-radius:50%;background:#fff"></div>
<svg width="1920" height="1080" viewBox="0 0 1920 1080" fill="none" stroke-linecap="round" stroke-linejoin="round"><path d="M25,10.6 Q32,12.5 40,11 Q37,16 31.5,15.8 Q27,15.2 25,10.6 Z" fill="#a8392b"/><path d="M42.1,14.3 H51.6 Q58.2,14.3 58.2,20.3 Q58.2,26.4 51.6,26.4 H48 V33.9 H42.1 Z M48,19.1 V23.4 H50.8 Q52.9,23.4 52.9,21.25 Q52.9,19.1 50.8,19.1 Z" fill="#000" fill-rule="evenodd"/><path d="M25.5,20.5 Q29,19.2 33,19.3 Q39.6,19.6 39.6,25 V33.9 H34.2 V32.3 Q32.5,34.3 29.5,34.3 Q24.1,34.3 24.1,29.8 Q24.1,25.8 30,25.3 L34,25 Q34,23.2 31.5,23.2 Q28.5,23.2 25.5,24.4 Z M34,27.8 L31,28.1 Q29.4,28.3 29.4,29.6 Q29.4,30.9 31,30.9 Q34,30.9 34,28.5 Z" fill="#000" fill-rule="evenodd"/><circle cx="190.8" cy="19.8" r="1.35" fill="#6f6f6f"/><line x1="194.8" y1="19.8" x2="204.7" y2="19.8" stroke="#6f6f6f" stroke-width="1.5"/><circle cx="190.8" cy="25" r="1.35" fill="#6f6f6f"/><line x1="194.8" y1="25" x2="204.7" y2="25" stroke="#6f6f6f" stroke-width="1.5"/><circle cx="190.8" cy="29.7" r="1.35" fill="#6f6f6f"/><line x1="194.8" y1="29.7" x2="204.7" y2="29.7" stroke="#6f6f6f" stroke-width="1.5"/><path d="M299.5,18.4 V31.2 H314.5" stroke="#1e5c7e" stroke-width="1.6"/><path d="M303.5,21.3 H310.5 M303.5,24.2 H308 M303.5,27.1 H312.6" stroke="#1e5c7e" stroke-width="1.5"/><path d="M417.2,19.6 H428.8 M423.0,20.400000000000002 V30.8 M418.0,30.8 H428.0 M418.4,20.400000000000002 L415.7,26.200000000000003 M418.4,20.400000000000002 L421.1,26.200000000000003 M415.6,26.200000000000003 H421.2 A2.8,2.8 0 0 1 415.6,26.200000000000003 M427.6,20.400000000000002 L424.9,26.200000000000003 M427.6,20.400000000000002 L430.3,26.200000000000003 M424.8,26.200000000000003 H430.4 A2.8,2.8 0 0 1 424.8,26.200000000000003" stroke="#666" stroke-width="1.4"/><circle cx="423.0" cy="19.6" r="0.9" fill="#fff" stroke="#666" stroke-width="1.1"/><path d="M1682.43,17.91 L1682.50,15.21 L1686.50,15.21 L1686.57,17.91 L1689.26,19.46 L1691.63,18.17 L1693.63,21.64 L1691.33,23.05 L1691.33,26.15 L1693.63,27.56 L1691.63,31.03 L1689.26,29.74 L1686.57,31.29 L1686.50,33.99 L1682.50,33.99 L1682.43,31.29 L1679.74,29.74 L1677.37,31.03 L1675.37,27.56 L1677.67,26.15 L1677.67,23.05 L1675.37,21.64 L1677.37,18.17 L1679.74,19.46 Z" stroke="#444" stroke-width="1.5" stroke-linejoin="round"/><circle cx="1684.5" cy="24.6" r="3" stroke="#444" stroke-width="1.5"/><circle cx="1734.3" cy="24.5" r="9.7" stroke="#444" stroke-width="1.5"/><path d="M1731.4,21.6 Q1731.6,18.7 1734.5,18.7 Q1737.3,18.8 1737.3,21.4 Q1737.3,23.2 1735.4,24.1 Q1734.4,24.7 1734.4,26.3" stroke="#444" stroke-width="1.5"/><circle cx="1734.4" cy="29.3" r="0.9" fill="#444"/><path d="M1749.5,23.5 H1757.0 L1753.25,27.625 Z" stroke="#666" stroke-width="1.1"/><circle cx="1806" cy="20.3" r="4.2" stroke="#444" stroke-width="1.5"/><path d="M1798.4,33.5 Q1798.4,26.8 1806,26.8 Q1813.6,26.8 1813.6,33.5 Z" stroke="#444" stroke-width="1.5"/><path d="M1873.3,23.5 H1880.8 L1877.05,27.625 Z" stroke="#666" stroke-width="1.1"/><g transform="translate(40,56)" stroke="#444" stroke-width="1.5"><path d="M11.7,10.5 H8 Q5.3,10.5 5.3,13.2 V21.7 Q5.3,24.4 8,24.4 H12.6 Q15.3,24.4 15.3,21.7 V20.3"/><path d="M16.8,5.1 H20.3 L24.6,9.4 V17 Q24.6,19.6 22,19.6 H16.8 Q14.2,19.6 14.2,17 V7.7 Q14.2,5.1 16.8,5.1 Z"/><path d="M20.3,5.3 V8.4 Q20.3,9.3 21.2,9.3 H24.4"/></g><g transform="translate(40,56)" stroke="#444" stroke-width="1.5"><path d="M68.9,9.4 H66 Q63.3,9.4 63.3,12.1 V20.7 Q63.3,23.4 66,23.4 H74.4 Q77.1,23.4 77.1,20.7 V18.9"/><path d="M69.9,17.6 Q70.5,11.3 82,11 M76.4,6.5 L82.3,11 L76.4,15.5"/></g><g stroke="#444" stroke-width="1.5"><path d="M161.4,64.2 H178 M166.6,64 Q166.6,61.3 168.6,61.3 H171.8 Q173.8,61.3 173.8,64"/><path d="M162.8,64.4 L163.3,78 Q163.4,80.5 165.8,80.5 H174.3 Q176.7,80.5 176.8,78 L177.2,64.4"/><path d="M166.3,68 V76.4 M169.9,68 V76.4 M173.5,68 V76.4"/></g><g stroke="#444" stroke-width="1.4"><path d="M224,63 L226,61.3 L230.3,65 L230.3,67.3 L228.8,68.5 L226.5,68.5 Z"/><path d="M229.5,67.8 L234,72.2"/><rect x="-2.6" y="-6" width="5.2" height="12" rx="1.2" transform="translate(239,77) rotate(-45)"/><path d="M233.6,68.4 Q231.8,66.5 232.8,63.8 Q234.3,61 237.6,61.3 L235,64 L236.1,66.3 L238.4,67.3 L241,64.8 Q241.4,68 238.6,69.6 Q236.3,70.6 234.3,69.4" /><path d="M231.4,71.6 L224.2,78.6 Q223.2,80.2 224.4,81 Q225.5,81.8 226.8,80.8 L234,73.9"/></g><path d="M251.8,89.5 H259.0 L255.4,93.46 Z" stroke="#666" stroke-width="1.1"/><g stroke="#444" stroke-width="1.5"><path d="M309.5,61.2 H316 L322.2,67.4 V79.2 Q322.2,81.6 319.8,81.6 H309.3 Q306.8,81.6 306.8,79.2 V63.7 Q306.8,61.2 309.5,61.2 Z"/><path d="M315.8,61.5 V65.3 Q315.8,67.6 318.1,67.6 H322"/><path d="M310.4,71.6 H318.6 M310.4,74.6 H318.6 M310.4,77.6 H318.6"/></g><path d="M331.3,89.5 H338.3 L334.8,93.35 Z" stroke="#666" stroke-width="1.1"/><path d="M377.33,64.0 H390.67 M384.0,65.04 V78.56 M378.25,78.56 H389.75 M378.71,65.04 L375.605,72.58 M378.71,65.04 L381.815,72.58 M375.49,72.58 H381.93 A3.2199999999999998,3.6399999999999997 0 0 1 375.49,72.58 M389.29,65.04 L386.185,72.58 M389.29,65.04 L392.395,72.58 M386.07,72.58 H392.51 A3.2199999999999998,3.6399999999999997 0 0 1 386.07,72.58" stroke="#444" stroke-width="1.4"/><circle cx="384.0" cy="64.0" r="1.035" fill="#fff" stroke="#444" stroke-width="1.1"/><path d="M438.8,61.6 V80.6 H458.8 M442,74.5 L446.5,68.5 L450.5,72 L456.5,66.6" stroke="#444" stroke-width="1.5"/><circle cx="533" cy="66.2" r="5.6" stroke="#555" stroke-width="1.1"/><path d="M533,65 V69.2 M532,65 H533" stroke="#555" stroke-width="1.1"/><circle cx="533" cy="63.3" r="0.7" fill="#555"/><circle cx="677" cy="80" r="10.4" stroke="#fff" stroke-width="1.6"/><path d="M674.2,75 L681.8,80 L674.2,85 Z" stroke="#fff" stroke-width="1.6"/><circle cx="816" cy="80" r="8.7" stroke="#3f9a4d" stroke-width="1.4"/><path d="M812.3,80.3 L815,83 L820,77.3" stroke="#3f9a4d" stroke-width="1.4"/><path d="M1713.5,75 H1709.3 V85.8 H1720 V81.5 M1714.5,80.8 L1720,75.2 M1716.6,74.3 H1720.6 V78.3" stroke="#c9d6dd" stroke-width="1.2"/><path d="M1838.3,77.2 H1845.8 L1842.05,81.325 Z" stroke="#b9ccd6" stroke-width="1.1"/><defs><clipPath id="below"><rect x="0" y="110.5" width="400" height="50"/></clipPath></defs><path d="M320.2,106 L325.3,111.2 L330.4,106" stroke="#888" stroke-width="1.3" clip-path="url(#below)"/><path d="M320.2,171.5 L325.3,176.7 L330.4,171.5" stroke="#bdbdbd" stroke-width="1.2"/><path d="M319.5,245.6 L320.4,242.5 L327.6,235.3 L329.8,237.5 L322.6,244.7 Z M328.3,234.6 L329,233.9 Q329.6,233.4 330.2,234 L331,234.8 Q331.6,235.4 331.1,236 L330.4,236.7 Z" fill="#c4c4c4"/><g stroke="#1f4f6b" stroke-width="2.1" stroke-linecap="butt"><path d="M36,375 V386 M31.3,377.7 L40.7,383.3 M31.3,383.3 L40.7,377.7"/></g><circle cx="36" cy="556.7" r="5.9" fill="#1f4f6b"/><path d="M36,553.5 V557 L38.3,558.6" stroke="#fff" stroke-width="1.2"/><path d="M31,752 Q31.5,743.5 41.5,742.3 Q41,751.2 33.6,751 Z" fill="#1f4f6b"/><path d="M30.5,752.5 Q34,747.5 38.5,745" stroke="#fff" stroke-width="0.9"/><path d="M31.5,917.8 V928 H42.6 M34.5,920.5 H38.8 M34.5,922.9 H37.5 M34.5,925.3 H40.5" stroke="#fff" stroke-width="1.4"/><path d="M382.2,740.6 V751 H393.6 M385.3,743.4 H389.6 M385.3,745.8 H388.3 M385.3,748.2 H391.4" stroke="#fff" stroke-width="1.4"/><path d="M392.5,139.3 L414.2,147.6 L403.2,150.2 L401.6,160.5 Z" stroke="#fff" stroke-width="1.1" stroke-linejoin="miter"/><rect x="392.3" y="185.2" width="11.4" height="15.6" stroke="#666" stroke-width="1.2"/><path d="M403.7,185.2 H409 M403.7,200.8 H409" stroke="#888" stroke-width="1" stroke-dasharray="1.5,1.5"/><path d="M412.2,185.5 V200.5 M410.2,187.6 L412.2,185.5 L414.2,187.6 M410.2,198.4 L412.2,200.5 L414.2,198.4" stroke="#666" stroke-width="1.1"/><path d="M1550,151 L1561,141.2 H1562.7 L1571.6,151 M1552,149.5 V160.7 H1570 V149.5 M1557.5,160.7 V153.5 H1561 V160.7 M1566.7,146.5 V160.7" stroke="#666" stroke-width="1.5"/><path d="M1604.8,139.4 L1616.3,143.9 V157.6 L1604.8,162 L1593.3,157.6 V143.9 Z M1593.3,143.9 L1604.8,148.3 L1616.3,143.9 M1604.8,148.3 V162" stroke="#666" stroke-width="1.5"/><path d="M1644.6,143 H1641.3 Q1639.8,143 1639.8,144.5 V160.8 Q1639.8,162.3 1641.3,162.3 H1656 Q1657.5,162.3 1657.5,160.8 V144.5 Q1657.5,143 1656,143 H1653.5 M1644.6,143.5 V140.5 Q1644.6,139.3 1645.8,139.3 H1652.3 Q1653.5,139.3 1653.5,140.5 V143.5 Z" stroke="#666" stroke-width="1.5"/><path d="M1647.8,148.3 H1654 M1647.8,151.5 H1654 M1647.8,154.6 H1654" stroke="#666" stroke-width="1.4"/><circle cx="1644.3" cy="148.3" r="0.8" fill="#666"/><circle cx="1644.3" cy="151.5" r="0.8" fill="#666"/><circle cx="1644.3" cy="154.6" r="0.8" fill="#666"/><path d="M1681.4,145.6 L1686.7,139.3 H1702.7 V156.3 L1697.3,162.5 H1681.4 Z" stroke="#666" stroke-width="1.5"/><g clip-path="url(#hcube)" stroke="#777" stroke-width="0.9"><line x1="1665.2" y1="166" x2="1687.2" y2="138"/><line x1="1668.4" y1="166" x2="1690.4" y2="138"/><line x1="1671.6" y1="166" x2="1693.6" y2="138"/><line x1="1674.8" y1="166" x2="1696.8" y2="138"/><line x1="1678.0" y1="166" x2="1700.0" y2="138"/><line x1="1681.2" y1="166" x2="1703.2" y2="138"/><line x1="1684.4" y1="166" x2="1706.4" y2="138"/><line x1="1687.6" y1="166" x2="1709.6" y2="138"/><line x1="1690.8" y1="166" x2="1712.8" y2="138"/><line x1="1694.0" y1="166" x2="1716.0" y2="138"/><line x1="1697.2" y1="166" x2="1719.2" y2="138"/><line x1="1700.4" y1="166" x2="1722.4" y2="138"/></g><defs><clipPath id="hcube"><path d="M1681.4,145.6 L1686.7,139.3 H1702.7 V156.3 L1697.3,162.5 H1681.4 Z"/></clipPath></defs><path d="M1725.6,145.5 V140 H1731 M1742.8,140 H1748.2 V145.5 M1748.2,156.5 V162 H1742.8 M1731,162 H1725.6 V156.5" stroke="#666" stroke-width="1.5"/><path d="M1739.8,142.1 L1730,150.9 L1739.8,159.6 M1736.5,147.5 Q1738.7,150.9 1736.5,154.3" stroke="#666" stroke-width="1.5"/><ellipse cx="1781" cy="150.9" rx="4" ry="11.3" stroke="#666" stroke-width="1.5"/><ellipse cx="1781" cy="150.9" rx="11.6" ry="3.6" stroke="#666" stroke-width="1.5"/><path d="M1780,149 L1782.5,151.5 L1780,154 M1783.5,147.5 L1785.5,149.2" stroke="#666" stroke-width="1.1"/><path d="M1814.2,143.4 L1818.6,140.3 H1835.9 V157.1 L1831.9,161.6 H1814.2 Z M1814.2,143.4 H1831.9 V161.6 M1831.9,143.4 L1835.9,140.3 M1823,143.4 V161.6 M1827.8,143.4 V161.6 M1814.2,152.5 H1823" stroke="#666" stroke-width="1.5"/><path d="M1823.5,146 L1827.5,149 M1823.5,150 L1827.5,153 M1823.5,154 L1827.5,157 M1816,151.5 L1820,149" stroke="#999" stroke-width="0.9"/><path d="M1858,145.5 V140.1 H1863.5 M1875,140.1 H1880.6 V145.5 M1880.6,157 V162.6 H1875 M1863.5,162.6 H1858 V157" stroke="#666" stroke-width="1.5"/><path d="M1861.1,147.4 H1864.7 L1865.8,145.6 H1872.6 L1873.7,147.4 H1878 V157.6 H1861.1 Z" stroke="#666" stroke-width="1.5"/><circle cx="1869.4" cy="151.9" r="3" stroke="#666" stroke-width="1.5"/><defs><linearGradient id="gy" x1="0" x2="1"><stop offset="0" stop-color="#0f5a30"/><stop offset="0.5" stop-color="#23864f"/><stop offset="1" stop-color="#125d34"/></linearGradient></defs><path d="M427,653.5 L405.7,664.2" stroke="#3a8ac0" stroke-width="4.6" stroke-linecap="butt"/><circle cx="405.7" cy="664.3" r="4.4" fill="#3583bb"/><path d="M427,653.5 L451,663.7" stroke="#a81c1c" stroke-width="5" stroke-linecap="butt"/><circle cx="451.2" cy="663.8" r="4.6" fill="#c0201f"/><rect x="424" y="626.5" width="6" height="28" fill="url(#gy)"/><path d="M421.3,627.5 L427,619.8 L433.1,627.5 Z" fill="#1d7a45"/><text x="427.5" y="617.2" font-size="9" fill="#1a7a4a" text-anchor="middle" font-family="Liberation Sans">Y</text><text x="461.8" y="671.5" font-size="9.5" fill="#b02030" text-anchor="middle" font-family="Liberation Sans">X</text><text x="395.6" y="672.5" font-size="9.5" fill="#3a86b8" text-anchor="middle" font-family="Liberation Sans">Z</text><path d="M683.5,579 V597.5 L687.8,593.4 L690.8,600 L693.6,598.7 L690.6,592.2 L696.4,592.2 Z" fill="#fff" stroke="#000" stroke-width="1.3" stroke-linejoin="miter"/><path d="M1750.8,744.3 Q1751,740.8 1754,740.8 Q1757,740.9 1757,743.6 Q1757,745.3 1755.1,746.3 Q1754.1,746.9 1754.1,748.6" stroke="#fff" stroke-width="1.6"/><circle cx="1754.1" cy="751.6" r="1" fill="#fff"/><path d="M1784.3,742.4 L1793.3,751.4 M1793.3,742.4 L1784.3,751.4" stroke="#fff" stroke-width="1.8"/><path d="M608.5,795.2 L613.3,800 L618.1,795.2" stroke="#bdbdbd" stroke-width="1.2"/><path d="M1111,787.2 L1117.4,792.3 L1111,797.4" stroke="#333" stroke-width="1.6"/><path d="M1107.8,841.5 L1113.6,848.5 L1119.4,841.5" stroke="#333" stroke-width="1.6"/><path d="M1107.8,941.5 L1113.6,948.5 L1119.4,941.5" stroke="#333" stroke-width="1.6"/><path d="M1876,997.5 L1871.8,990.5 Q1870.6,988.5 1870.8,986.8 Q1871.4,983.2 1876,983.2 Q1880.6,983.2 1881.2,986.8 Q1881.4,988.5 1880.2,990.5 Z" stroke="#3a7488" stroke-width="1.0"/><circle cx="1876" cy="998.6" r="1.7" fill="#3a8aa3"/><path d="M1876,980.3 V982 M1871.6,981 L1872.6,982.5 M1880.4,981 L1879.4,982.5 M1868.5,984.2 L1870.2,985.2 M1883.5,984.2 L1881.8,985.2 M1866.8,988.5 H1869.5 M1882.5,988.5 H1885.2" stroke="#3a7488" stroke-width="1.0"/></svg>
</body></html>
